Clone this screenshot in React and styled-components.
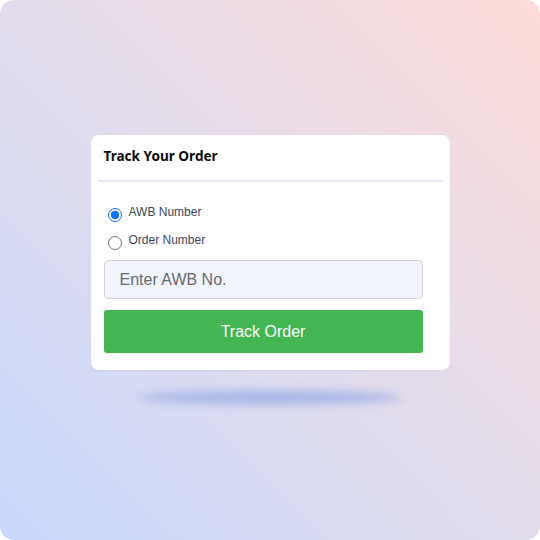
import styled, { createGlobalStyle } from 'styled-components';

const GlobalStyle = createGlobalStyle`
  html, body {
    margin: 0;
    padding: 0;
    background: #ffffff;
  }
  * {
    box-sizing: border-box;
  }
`;

const Page = styled.main`
  width: 540px;
  height: 540px;
  border-radius: 14px;
  overflow: hidden;
  background: linear-gradient(45deg, #c8d8fc 0%, #e2dcec 50%, #fddbd8 100%);
  display: flex;
  flex-direction: column;
  align-items: center;
  padding-top: 135px;
`;

const Card = styled.section`
  width: 359px;
  background: #ffffff;
  border-radius: 8px;
  box-shadow: 0 1px 3px rgba(120, 110, 150, 0.08);
`;

const Header = styled.header`
  padding: 11px 13px 14px;

  h2 {
    margin: 0;
    font-family: 'Noto Sans', 'Open Sans', sans-serif;
    font-size: 13.6px;
    line-height: 20px;
    font-weight: 700;
    color: #0c0c0c;
  }
`;

const Divider = styled.hr`
  margin: 0 7px;
  border: none;
  height: 2px;
  background: #e3e7f1;
`;

const Body = styled.div`
  padding: 19px 27px 17px 13px;
  display: flex;
  flex-direction: column;
`;

const RadioRow = styled.label`
  height: 28px;
  display: flex;
  align-items: flex-start;
  gap: 7px;
  font-family: 'Liberation Sans', Arial, sans-serif;
  font-size: 12px;
  line-height: 14px;
  color: #3d4762;

  input {
    width: 14px;
    height: 14px;
    margin: 7px 0 0 4px;
    accent-color: #0a72f5;
  }

  span {
    padding-top: 4px;
  }
`;

const Field = styled.input`
  margin-top: 3px;
  height: 39px;
  width: 100%;
  border: 1px solid #d3d5db;
  border-radius: 4px;
  background: #f1f4fd;
  padding: 0 15px;
  font-family: 'Liberation Sans', Arial, sans-serif;
  font-size: 16px;
  color: #333;

  &::placeholder {
    color: #6b6b6e;
  }
`;

const TrackButton = styled.button`
  margin-top: 11px;
  height: 43px;
  width: 100%;
  border: none;
  border-radius: 3px;
  background: #43b553;
  color: #ffffff;
  font-family: 'Liberation Sans', Arial, sans-serif;
  font-size: 16px;
  cursor: pointer;
`;

const FloorShadow = styled.div`
  margin-top: 21px;
  width: 264px;
  height: 13px;
  border-radius: 50%;
  background: #a6b4e6;
  filter: blur(5px);
`;

export default function App() {
  return (
    <>
      <GlobalStyle />
      <Page>
        <Card>
          <Header>
            <h2>Track Your Order</h2>
          </Header>
          <Divider />
          <Body>
            <RadioRow>
              <input type="radio" name="track-by" defaultChecked />
              <span>AWB Number</span>
            </RadioRow>
            <RadioRow>
              <input type="radio" name="track-by" />
              <span>Order Number</span>
            </RadioRow>
            <Field placeholder="Enter AWB No." />
            <TrackButton>Track Order</TrackButton>
          </Body>
        </Card>
        <FloorShadow />
      </Page>
    </>
  );
}
